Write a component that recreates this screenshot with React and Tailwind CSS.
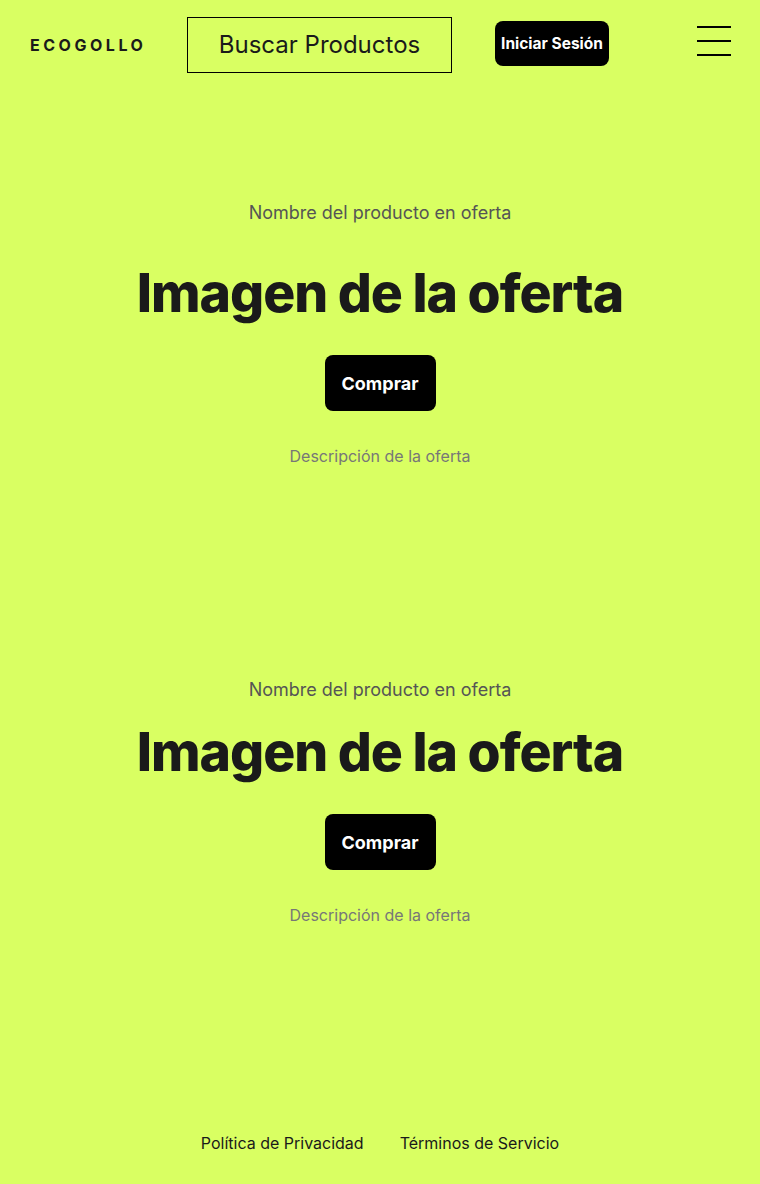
const Offer = ({ first }) => (
  <section className={`flex flex-col items-center text-center ${first ? 'pt-[112px]' : 'pt-0'}`}>
    <p className="text-[18px] leading-6 text-[#555555]">Nombre del producto en oferta</p>
    <h1 className={`${first ? 'mt-[36px]' : 'mt-[18px]'} text-[53.5px] leading-[64px] font-extrabold tracking-[-0.02em] text-[#1a1a1a]`}>
      Imagen de la oferta
    </h1>
    <button className="mt-[30px] w-[111px] h-[56px] rounded-lg bg-black text-white text-[18px] font-bold">
      Comprar
    </button>
    <p className="mt-[33px] text-[16px] leading-6 text-[#777777]">Descripción de la oferta</p>
  </section>
);

export default function App() {
  return (
    <div className="min-h-[1184px] w-full bg-[#d9ff62] flex flex-col font-['Inter',sans-serif]">
      {/* Header */}
      <header className="h-[89px] flex items-center pl-[30px] pr-[29px]">
        <span className="text-[16px] font-bold tracking-[0.22em] text-[#1a1a1a] w-[157px]">ECOGOLLO</span>
        <div className="w-[265px] h-[56px] border border-black flex items-center justify-center text-[24px] text-[#1a1a1a]">
          Buscar Productos
        </div>
        <button className="ml-[43px] mb-[2px] w-[114px] h-[45px] rounded-lg bg-black text-white text-[15.5px] font-bold">
          Iniciar Sesión
        </button>
        <button className="ml-auto mb-[8px] w-[34px] flex flex-col gap-[12px]" aria-label="Menú">
          <span className="block h-[2px] w-full bg-black" />
          <span className="block h-[2px] w-full bg-black" />
          <span className="block h-[2px] w-full bg-black" />
        </button>
      </header>

      <main className="flex flex-col">
        <Offer first />
        <div className="h-[210px]" />
        <Offer />
      </main>

      {/* Footer */}
      <footer className="mt-auto pb-[29px] flex justify-center gap-[36px] text-[16px] text-[#1a1a1a]">
        <a href="#">Política de Privacidad</a>
        <a href="#">Términos de Servicio</a>
      </footer>
    </div>
  );
}
